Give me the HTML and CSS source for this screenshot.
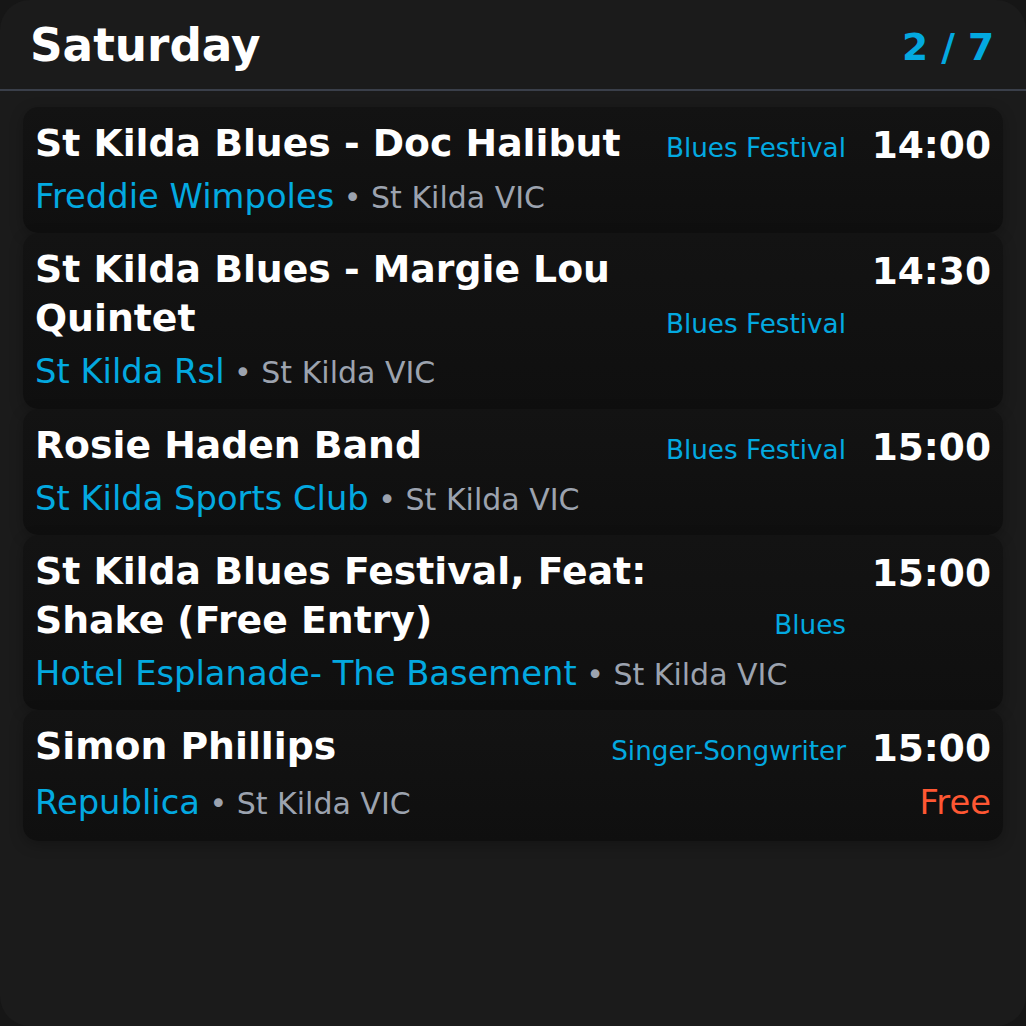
FILE: index.html
```html
<!DOCTYPE html>
<html>
<head>
<meta charset="utf-8">
<link rel="stylesheet" href="styles.css">
</head>
<body>
<div class="panel">
  <header class="header">
    <h1 class="day">Saturday</h1>
    <div class="pager">2 / 7</div>
  </header>
  <div class="list">
    <div class="card">
      <div class="row-top">
        <div class="title">St Kilda Blues - Doc Halibut</div>
        <div class="category">Blues Festival</div>
        <div class="time">14:00</div>
      </div>
      <div class="row-bottom">
        <div class="where"><span class="venue">Freddie Wimpoles</span><span class="loc"> • St Kilda VIC</span></div>
      </div>
    </div>
    <div class="card">
      <div class="row-top">
        <div class="title">St Kilda Blues - Margie Lou Quintet</div>
        <div class="category">Blues Festival</div>
        <div class="time">14:30</div>
      </div>
      <div class="row-bottom">
        <div class="where"><span class="venue">St Kilda Rsl</span><span class="loc"> • St Kilda VIC</span></div>
      </div>
    </div>
    <div class="card">
      <div class="row-top">
        <div class="title">Rosie Haden Band</div>
        <div class="category">Blues Festival</div>
        <div class="time">15:00</div>
      </div>
      <div class="row-bottom">
        <div class="where"><span class="venue">St Kilda Sports Club</span><span class="loc"> • St Kilda VIC</span></div>
      </div>
    </div>
    <div class="card">
      <div class="row-top">
        <div class="title">St Kilda Blues Festival, Feat: Shake (Free Entry)</div>
        <div class="category">Blues</div>
        <div class="time">15:00</div>
      </div>
      <div class="row-bottom">
        <div class="where"><span class="venue">Hotel Esplanade- The Basement</span><span class="loc"> • St Kilda VIC</span></div>
      </div>
    </div>
    <div class="card">
      <div class="row-top">
        <div class="title">Simon Phillips</div>
        <div class="category">Singer-Songwriter</div>
        <div class="time">15:00</div>
      </div>
      <div class="row-bottom">
        <div class="where"><span class="venue">Republica</span><span class="loc"> • St Kilda VIC</span></div>
        <div class="price">Free</div>
      </div>
    </div>
  </div>
</div>
</body>
</html>
```
FILE: styles.css
```css
* { box-sizing: border-box; }
html, body { margin: 0; padding: 0; }
body {
  background: #161616;
  font-family: "DejaVu Sans", sans-serif;
  width: 1026px;
  height: 1026px;
  overflow: hidden;
}
.panel {
  width: 1026px;
  height: 1026px;
  background: #1b1b1b;
  border-radius: 30px;
  overflow: hidden;
}
.header {
  height: 91px;
  padding: 4px 32px 0 30px;
  display: flex;
  align-items: center;
  justify-content: space-between;
  border-bottom: 2px solid #3a3f4a;
}
.day {
  margin: 0;
  font-size: 45.3px;
  font-weight: bold;
  color: #ffffff;
  line-height: 1.164;
}
.pager {
  font-size: 37.5px;
  font-weight: bold;
  color: #03a9e0;
}
.list {
  padding: 16px 23px 0;
  display: flex;
  flex-direction: column;
}
.card {
  background: linear-gradient(#131313, #0f0f0f);
  border-radius: 15px;
  padding: 12px 12px 15px;
  box-shadow: 0 4px 14px rgba(0, 0, 0, 0.25);
}
.row-top {
  display: flex;
  gap: 25px;
}
.title {
  flex: 1;
  font-size: 37.75px;
  font-weight: bold;
  line-height: 1.3;
  color: #ffffff;
}
.category {
  align-self: flex-end;
  margin-bottom: 3px;
  font-size: 26.25px;
  line-height: 1.25;
  color: #03a9e0;
  white-space: nowrap;
}
.time {
  width: 120px;
  text-align: right;
  font-size: 37.5px;
  font-weight: bold;
  line-height: 1.3;
  padding-top: 2px;
  margin-bottom: -2px;
  color: #ffffff;
}
.row-bottom {
  margin-top: 8px;
  display: flex;
  align-items: center;
  justify-content: space-between;
}
.where {
  line-height: 1.25;
  white-space: nowrap;
}
.venue {
  font-size: 33.75px;
  color: #03a9e0;
}
.loc {
  font-size: 30px;
  color: #9ca3af;
}
.price {
  font-size: 33.75px;
  line-height: 1.4;
  color: #ff5733;
}
```
